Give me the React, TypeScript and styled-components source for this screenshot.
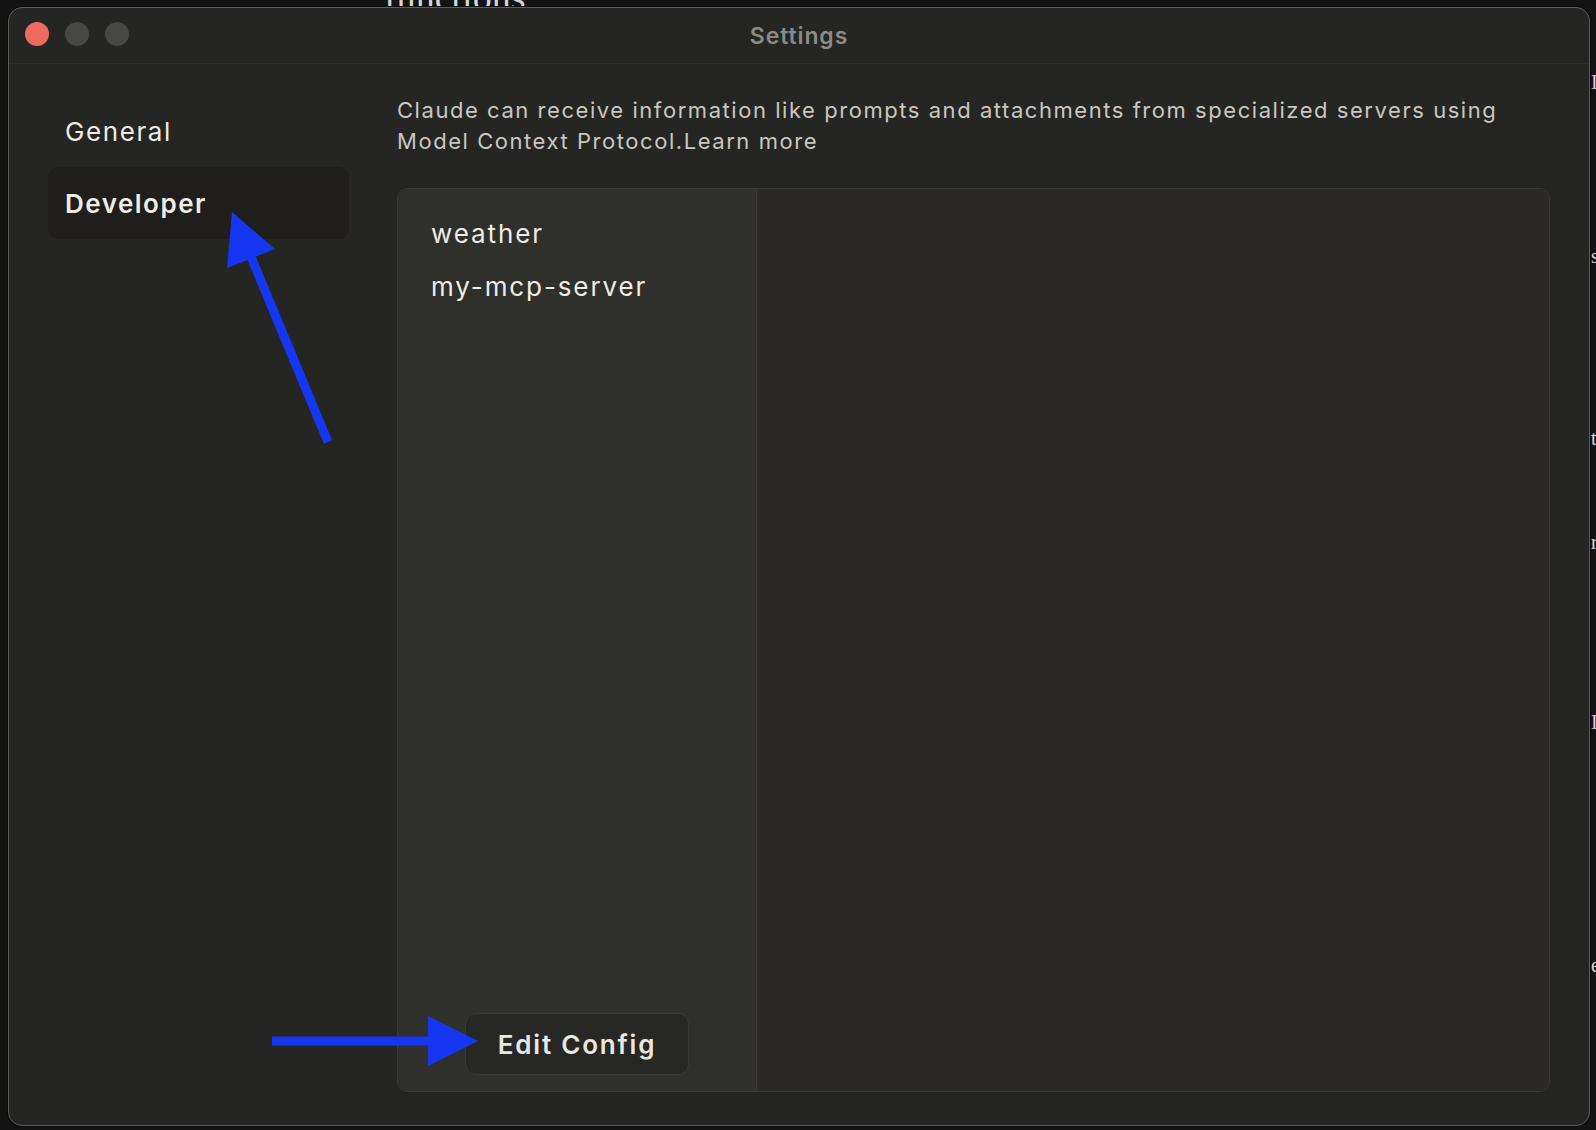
import React from 'react';
import styled, { createGlobalStyle } from 'styled-components';

const GlobalStyle = createGlobalStyle`
  html, body {
    margin: 0;
    padding: 0;
    background: #131313;
    overflow: hidden;
  }
  * {
    box-sizing: border-box;
  }
`;

const Desktop = styled.div`
  position: relative;
  width: 1596px;
  height: 1130px;
  background: #131313;
  overflow: hidden;
  font-family: Inter, 'Noto Sans', sans-serif;
`;

// bits of the page that sits behind the settings window
const BackdropWord = styled.div<{ $left: number; $top: number; $size: number }>`
  position: absolute;
  left: ${(p) => p.$left}px;
  top: ${(p) => p.$top}px;
  font-family: 'Liberation Serif', 'DejaVu Serif', serif;
  font-size: ${(p) => p.$size}px;
  line-height: 1;
  color: #d6d6d6;
  white-space: nowrap;
`;

const Window = styled.div`
  position: absolute;
  left: 8px;
  top: 7px;
  width: 1582px;
  height: 1119px;
  display: flex;
  flex-direction: column;
  background: #252523;
  border: 1px solid #5e5e5b;
  border-radius: 14px;
  overflow: hidden;
  box-shadow: 0 0 0 1px #0b0b0b;
`;

const TitleBar = styled.div`
  display: grid;
  grid-template-columns: 1fr auto 1fr;
  align-items: center;
  height: 56px;
  padding: 0 16px;
  border-bottom: 1px solid #2d2d2b;
  flex-shrink: 0;
`;

const Lights = styled.div`
  display: flex;
  gap: 16px;
  margin-top: -3px;
`;

const Light = styled.span<{ $color: string }>`
  width: 24px;
  height: 24px;
  border-radius: 50%;
  background: ${(p) => p.$color};
`;

const Title = styled.div`
  font-size: 23px;
  font-weight: 600;
  color: #8b8a86;
  letter-spacing: 0.9px;
`;

const Body = styled.div`
  flex: 1;
  display: flex;
  min-height: 0;
`;

const Sidebar = styled.nav`
  width: 340px;
  flex-shrink: 0;
  padding: 31px 0 0 39px;
  display: flex;
  flex-direction: column;
`;

const NavItem = styled.div<{ $active?: boolean }>`
  height: 72px;
  display: flex;
  align-items: center;
  padding-left: 17px;
  border-radius: 10px;
  font-size: 26px;
  letter-spacing: ${(p) => (p.$active ? '1.5px' : '1.6px')};
  font-weight: ${(p) => (p.$active ? 600 : 400)};
  color: #eeece6;
  background: ${(p) => (p.$active ? '#1f1e1c' : 'transparent')};
`;

const Main = styled.main`
  flex: 1;
  display: flex;
  flex-direction: column;
  padding: 31px 39px 33px 48px;
  min-width: 0;
`;

const Description = styled.p`
  margin: 0 0 32px;
  font-size: 22px;
  line-height: 30.5px;
  letter-spacing: 1.55px;
  color: #c9c7c1;
  white-space: nowrap;
`;

const Panel = styled.div`
  flex: 1;
  display: flex;
  border: 1px solid #393935;
  border-radius: 10px;
  overflow: hidden;
`;

const ServerColumn = styled.div`
  width: 359px;
  flex-shrink: 0;
  display: flex;
  flex-direction: column;
  background: #2f2f2b;
  border-right: 1px solid #383834;
  padding: 18px 0 16px;
`;

const ServerList = styled.ul`
  list-style: none;
  margin: 0;
  padding: 0 0 0 33px;
  flex: 1;
`;

const ServerItem = styled.li`
  height: 53px;
  display: flex;
  align-items: center;
  font-size: 26px;
  letter-spacing: 1.9px;
  color: #eeece6;
`;

const EditButton = styled.button`
  align-self: center;
  width: 224px;
  height: 62px;
  border-radius: 11px;
  border: 1px solid #3a3a32;
  background: #272725;
  color: #e9e7e1;
  font-family: Inter, 'Noto Sans', sans-serif;
  font-size: 26px;
  font-weight: 600;
  letter-spacing: 1.8px;
  cursor: pointer;
`;

const DetailPane = styled.div`
  flex: 1;
  background: #2a2926;
`;

const Annotations = styled.svg`
  position: absolute;
  inset: 0;
  pointer-events: none;
`;

const ARROW = '#1637f2';

export default function App() {
  return (
    <>
      <GlobalStyle />
      <Desktop>
        <BackdropWord $left={384} $top={-22} $size={38}>
          functions
        </BackdropWord>
        <BackdropWord $left={1591} $top={72} $size={20}>I</BackdropWord>
        <BackdropWord $left={1591} $top={246} $size={20}>s</BackdropWord>
        <BackdropWord $left={1591} $top={428} $size={20}>t</BackdropWord>
        <BackdropWord $left={1591} $top={532} $size={20}>r</BackdropWord>
        <BackdropWord $left={1591} $top={712} $size={20}>I</BackdropWord>
        <BackdropWord $left={1591} $top={955} $size={20}>e</BackdropWord>

        <Window>
          <TitleBar>
            <Lights>
              <Light $color="#ed6a5e" />
              <Light $color="#474745" />
              <Light $color="#474745" />
            </Lights>
            <Title>Settings</Title>
            <span />
          </TitleBar>

          <Body>
            <Sidebar>
              <NavItem>General</NavItem>
              <NavItem $active>Developer</NavItem>
            </Sidebar>

            <Main>
              <Description>
                Claude can receive information like prompts and attachments from specialized servers using
                <br />
                Model Context Protocol.Learn more
              </Description>

              <Panel>
                <ServerColumn>
                  <ServerList>
                    <ServerItem>weather</ServerItem>
                    <ServerItem>my-mcp-server</ServerItem>
                  </ServerList>
                  <EditButton>Edit Config</EditButton>
                </ServerColumn>
                <DetailPane />
              </Panel>
            </Main>
          </Body>
        </Window>

        <Annotations width="1596" height="1130" viewBox="0 0 1596 1130">
          <line x1="328" y1="442" x2="249" y2="252" stroke={ARROW} strokeWidth="9" />
          <polygon points="232,212 227,268 275,249" fill={ARROW} />
          <line x1="272" y1="1041" x2="432" y2="1041" stroke={ARROW} strokeWidth="9" />
          <polygon points="478,1041 428,1016 428,1066" fill={ARROW} />
        </Annotations>
      </Desktop>
    </>
  );
}
